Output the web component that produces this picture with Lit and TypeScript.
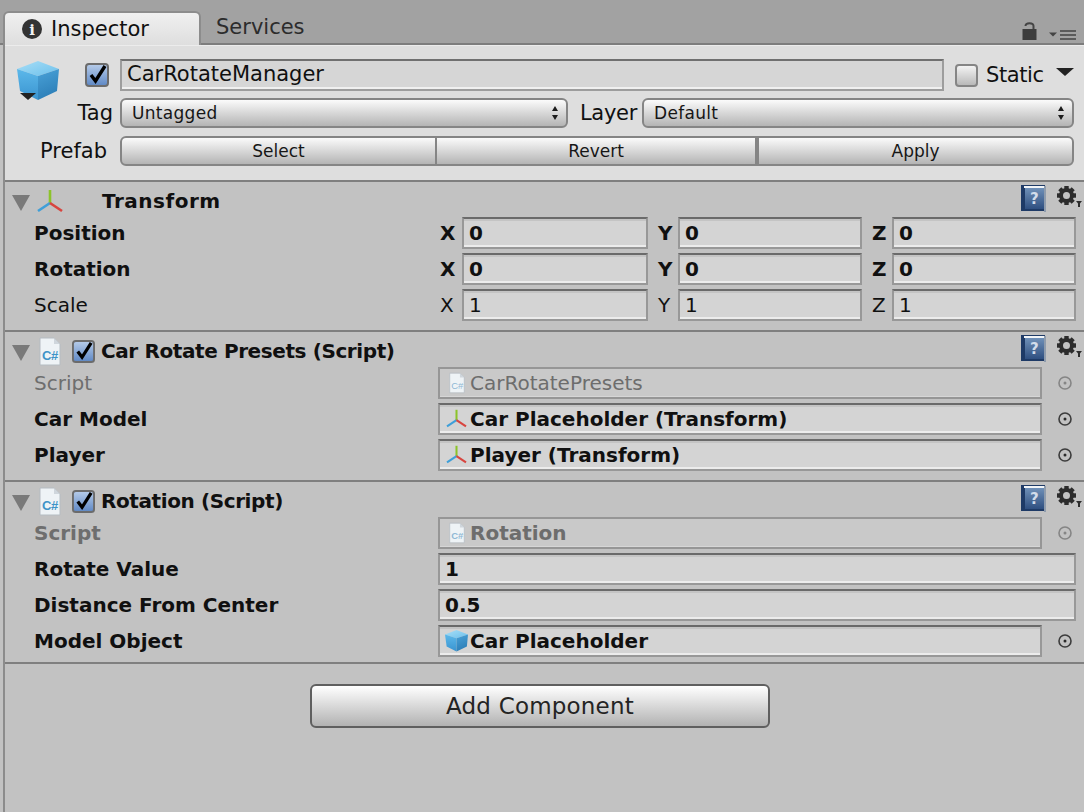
import { LitElement, html, svg, css } from "lit";
import { customElement } from "lit/decorators.js";

const cube = (w: number, h: number) => html`<svg width=${w} height=${h} viewBox="0 0 42 40">
  <defs>
    <linearGradient id="ct" x1="0" y1="0" x2="1" y2="1"><stop offset="0" stop-color="#a8def6"/><stop offset="1" stop-color="#6cc0ec"/></linearGradient>
    <linearGradient id="cl" x1="0" y1="0" x2="0" y2="1"><stop offset="0" stop-color="#5cb8ea"/><stop offset="1" stop-color="#3a94d0"/></linearGradient>
    <linearGradient id="cr" x1="0" y1="0" x2="0.300" y2="1"><stop offset="0" stop-color="#4aa2d8"/><stop offset="1" stop-color="#2d7fb8"/></linearGradient>
  </defs>
  <path d="M0 8 L21 0 L42 8 L21 15 Z" fill="url(#ct)"/>
  <path d="M0 8 L21 15 L21 39 L3 30 Z" fill="url(#cl)"/>
  <path d="M21 15 L42 8 L40 30 L21 39 Z" fill="url(#cr)"/>
</svg>`;

const axis = (w = 26, h = 24) => html`<svg width=${w} height=${h} viewBox="0 0 26 24" fill="none" stroke-width="2.600">
  <path d="M13 1 L13 14" stroke="#8cc32a"/>
  <path d="M13 14 L1 22" stroke="#3f9fd8"/>
  <path d="M13 14 L25 22" stroke="#d8453f"/>
</svg>`;

const csFile = (w = 22, h = 29, ink = "#3f94c8") => html`<svg width=${w} height=${h} viewBox="0 0 22 29">
  <path d="M1 1 H15 L21 7 V28 H1 Z" fill="#eef3f6" stroke="#b5bcc2" stroke-width="1"/>
  <path d="M15 1 V7 H21 Z" fill="#cfd6dc"/>
  <text x="3" y="23" font-family="Liberation Sans, sans-serif" font-size="13" fill=${ink}>C#</text>
</svg>`;

const help = () => html`<svg width="25" height="27" viewBox="0 0 25 27">
  <defs><linearGradient id="hb" x1="0" y1="0" x2="0" y2="1"><stop offset="0" stop-color="#6f90b8"/><stop offset="1" stop-color="#2f4f80"/></linearGradient></defs>
  <rect x="0" y="0" width="24" height="26" fill="#1e3a66"/>
  <rect x="3" y="1" width="21" height="2" fill="#f2f5f8"/>
  <rect x="23" y="1" width="2" height="26" fill="#8f9cad"/>
  <rect x="4" y="3" width="19" height="21" fill="url(#hb)"/>
  <text x="9" y="19" font-family="DejaVu Sans, sans-serif" font-size="15" fill="#d2dcea">?</text>
</svg>`;

const gear = () => html`<svg class="gear" width="25" height="22" viewBox="0 0 25 22">
  <g fill="#2c2c2c" transform="translate(9.500 9.500)">
    ${[0, 45, 90, 135].map((a) => svg`<rect x="-2.200" y="-9.500" width="4.400" height="19" transform="rotate(${a})"/>`)}
  </g>
  <circle cx="9.500" cy="9.500" r="5.500" fill="#c2c2c2" stroke="#2c2c2c" stroke-width="4"/>
  <path d="M19 15 H25 L23 17.500 V21 H21 V17.500 Z" fill="#2c2c2c"/>
</svg>`;

const picker = (dim = false) => html`<svg class="picker" width="16" height="16" viewBox="0 0 16 16">
  <circle cx="8" cy="8" r="6" fill="none" stroke=${dim ? "#858585" : "#3c3c3c"} stroke-width="1.600"/>
  <circle cx="8" cy="8" r="1.500" fill=${dim ? "#858585" : "#2a2a2a"}/>
</svg>`;

const check = (w = 24) => html`<svg width=${w} height=${w} viewBox="0 0 24 24">
  <defs><linearGradient id="cb" x1="0" y1="0" x2="0" y2="1"><stop offset="0" stop-color="#b8cdea"/><stop offset="1" stop-color="#5d87c4"/></linearGradient></defs>
  <rect x="1" y="1" width="22" height="22" rx="3" fill="url(#cb)" stroke="#6c6c6c" stroke-width="2"/>
  <path d="M6 12 L10.500 18 L20 3" fill="none" stroke="#000" stroke-width="3.400"/>
</svg>`;

const updown = () => html`<svg width="8" height="14" viewBox="0 0 8 14"><path d="M4 0 L7 5 H1 Z M4 14 L1 9 H7 Z" fill="#1c1c1c"/></svg>`;

@customElement("app-root")
export class AppRoot extends LitElement {
  static styles = css`
    :host {
      display: block;
      width: 1084px;
      height: 812px;
      overflow: hidden;
      background: #c2c2c2;
      font-family: "DejaVu Sans", sans-serif;
      font-size: 20px;
      color: #101010;
    }
    svg { display: block; flex: none; }
    .tabs {
      height: 45px;
      box-sizing: border-box;
      background: #a2a2a2;
      border-bottom: 2px solid #7d7d7d;
      display: flex;
      align-items: flex-end;
      padding-left: 3px;
    }
    .tab-active {
      width: 198px;
      height: 34px;
      box-sizing: border-box;
      margin-bottom: -2px;
      background: linear-gradient(#f0f0f0, #dedede);
      border: 2px solid #8c8c8c;
      border-bottom: none;
      border-radius: 6px 6px 0 0;
      display: flex;
      align-items: center;
      gap: 8px;
      padding-left: 16px;
      font-size: 21px;
    }
    .tab {
      margin-left: 15px;
      height: 32px;
      display: flex;
      align-items: center;
      font-size: 21px;
      color: #2c2c2c;
    }
    .tab-tools {
      margin-left: auto;
      display: flex;
      align-items: flex-end;
      gap: 12px;
      padding: 0 8px 3px 0;
    }
    .body {
      margin-left: 3px;
      border-left: 2px solid #8c8c8c;
      height: 767px;
    }
    .head {
      height: 135px;
      box-sizing: border-box;
      background: #dedede;
      padding-top: 14px;
      display: flex;
      flex-direction: column;
      gap: 8px;
      border-top: 1px solid #ececec;
    }
    .hrow {
      display: flex;
      align-items: center;
      height: 30px;
    }
    .hlabel {
      width: 115px;
      box-sizing: border-box;
      text-align: right;
      flex: none;
      font-size: 21px;
      padding-right: 7px;
    }
    .hlabel.prefab { padding-right: 13px; }
    .cube-wrap {
      position: relative;
      width: 42px;
      height: 30px;
      margin-left: 12px;
      flex: none;
    }
    .cube-wrap svg { position: absolute; left: 0; top: 1px; }
    .cube-arrow {
      position: absolute;
      left: 3px;
      top: 33px;
      width: 0;
      height: 0;
      border: 8px solid transparent;
      border-top: 7px solid #222;
      border-bottom: none;
    }
    .name-check { margin: 0 11px 0 26px; }
    .name {
      width: 824px;
      height: 32px;
      flex: none;
      box-sizing: border-box;
      border: 2px solid #9d9d9d;
      border-top-color: #707070;
      background: #d6d6d6;
      box-shadow: inset 0 -2px 0 #f0f0f0;
      padding: 0 0 2px 5px;
      display: flex;
      align-items: center;
      font-size: 21px;
    }
    .static-box {
      width: 23px;
      height: 23px;
      box-sizing: border-box;
      flex: none;
      margin-left: 11px;
      border: 2px solid #858585;
      border-radius: 4px;
      background: linear-gradient(#f3f3f3, #b9b9b9);
    }
    .static { margin-left: 8px; font-size: 21px; letter-spacing: -0.4px; }
    .tri {
      margin-left: 12px;
      width: 0;
      height: 0;
      border: 9px solid transparent;
      border-top: 8px solid #222;
      border-bottom: none;
      margin-top: -6px;
    }
    .btn {
      box-sizing: border-box;
      height: 30px;
      border: 2px solid #858585;
      border-radius: 6px;
      background: linear-gradient(#fbfbfb, #b4b4b4);
      display: flex;
      align-items: center;
      justify-content: center;
      font-size: 17px;
      color: #161616;
    }
    .select {
      justify-content: space-between;
      padding: 0 7px 0 10px;
      letter-spacing: 0.3px;
    }
    .tag-select { width: 448px; }
    .layer-select { width: 432px; }
    .layer-label {
      width: 74px;
      box-sizing: border-box;
      text-align: right;
      padding-right: 5px;
      font-size: 21px;
      flex: none;
      letter-spacing: -0.3px;
    }
    .seg { border-radius: 0; }
    .seg.first { border-radius: 6px 0 0 6px; width: 317px; }
    .seg.mid { width: 320px; border-left: none; }
    .seg.last { width: 317px; border-radius: 0 6px 6px 0; border-left: 2px solid #858585; }
    .section {
      border-top: 2px solid #7f7f7f;
      padding: 0 8px 7px 0;
    }
    .section.end { padding-bottom: 3px; border-bottom: 2px solid #7f7f7f; }
    .shead {
      height: 33px;
      box-sizing: border-box;
      padding-top: 5px;
      display: flex;
      align-items: center;
      font-weight: bold;
      font-size: 20px;
      letter-spacing: -0.4px;
    }
    .title-wide { letter-spacing: 0.5px; }
    .fold {
      width: 0;
      height: 0;
      border: 9px solid transparent;
      border-top: 16px solid #7a7a7a;
      border-bottom: none;
      margin: 3px 7px 0 7px;
      flex: none;
    }
    .file-ic { margin-left: 2px; }
    .spacer { width: 39px; flex: none; }
    .shead-check { margin: 0 6px 0 11px; }
    .sicons {
      margin-left: auto;
      display: flex;
      align-items: center;
      margin-right: -6px;
      margin-top: -5px;
    }
    .gear { margin: -3px 0 0 11px; }
    .row {
      height: 36px;
      display: grid;
      grid-template-columns: 404px 1fr;
      align-items: center;
      padding-left: 29px;
    }
    .row.b .lbl, .row.b .axisl, .row.b .field { font-weight: bold; }
    .row.muted .lbl { color: #6e6e6e; }
    .vec {
      display: grid;
      grid-template-columns: 24px 186px 30px 184px 30px 184px;
      align-items: center;
    }
    .axisl { font-size: 20px; }
    .axisl.x { margin-left: 2px; }
    .axisl.yz { margin-left: 10px; }
    .field {
      box-sizing: border-box;
      height: 32px;
      border: 2px solid #989898;
      border-top-color: #6a6a6a;
      background: #d4d4d4;
      box-shadow: inset 0 2px 0 #c4c4c4, inset 0 -2px 0 #ececec;
      padding: 0 0 1px 5px;
      display: flex;
      align-items: center;
      font-size: 20px;
    }
    .obj {
      display: flex;
      align-items: center;
    }
    .obj .field { width: 604px; flex: none; }
    .ic { width: 23px; margin-right: 2px; display: flex; justify-content: center; flex: none; }
    .picker { margin-left: 15px; }
    .row.muted .field {
      border-color: #969696;
      background: #c9c9c9;
      color: #6d6d6d;
      box-shadow: inset 0 -1px 0 #d6d6d6;
    }
    .add-wrap { display: flex; padding: 20px 0 0 305px; }
    .add {
      width: 460px;
      height: 44px;
      font-size: 23px;
      letter-spacing: 0.2px;
      color: #242424;
      border-color: #5f5f5f;
      background: linear-gradient(#ffffff, #b2b2b2);
    }
  `;

  vecRow(label: string, bold: boolean, v: [string, string, string]) {
    return html`<div class="row ${bold ? "b" : ""}">
      <span class="lbl">${label}</span>
      <div class="vec">
        <span class="axisl x">X</span><div class="field">${v[0]}</div>
        <span class="axisl yz">Y</span><div class="field">${v[1]}</div>
        <span class="axisl yz">Z</span><div class="field">${v[2]}</div>
      </div>
    </div>`;
  }

  objRow(label: string, icon: unknown, text: string, muted = false, bold = true) {
    return html`<div class="row ${muted ? "muted" : ""} ${bold ? "b" : ""}">
      <span class="lbl">${label}</span>
      <div class="obj">
        <div class="field"><span class="ic">${icon}</span><span>${text}</span></div>
        ${picker(muted)}
      </div>
    </div>`;
  }

  valRow(label: string, value: string) {
    return html`<div class="row b">
      <span class="lbl">${label}</span>
      <div class="field">${value}</div>
    </div>`;
  }

  shead(icon: unknown, title: string, withCheck: boolean) {
    return html`<div class="shead">
      <span class="fold"></span>
      ${icon}
      ${withCheck ? html`<span class="shead-check">${check(23)}</span>` : html`<span class="spacer"></span>`}
      <span class=${withCheck ? "" : "title-wide"}>${title}</span>
      <span class="sicons">${help()}${gear()}</span>
    </div>`;
  }

  render() {
    const headFile = html`<span class="file-ic">${csFile()}</span>`;
    const dimFile = csFile(16, 22, "#8fb8d4");
    return html`
      <div class="tabs">
        <div class="tab-active">
          <svg width="22" height="22" viewBox="0 0 22 22">
            <circle cx="11" cy="11" r="10" fill="#333"/>
            <text x="11" y="16.500" text-anchor="middle" font-family="DejaVu Serif, serif" font-weight="bold" font-size="15" fill="#f2f2f2">i</text>
          </svg>
          <span>Inspector</span>
        </div>
        <div class="tab">Services</div>
        <div class="tab-tools">
          <svg width="15" height="18" viewBox="0 0 15 18">
            <path d="M3.500 4 Q3.500 1.200 7.500 1.200 Q11.500 1.200 11.500 4 V8" fill="none" stroke="#444" stroke-width="2"/>
            <rect x="0.500" y="7" width="14" height="11" fill="#3c3c3c"/>
          </svg>
          <svg width="27" height="10" viewBox="0 0 27 10">
            <path d="M0 2.500 H8 L4 6.500 Z" fill="#444"/>
            <path d="M11 1 H27 M11 5 H27 M11 9 H27" stroke="#444" stroke-width="1.600"/>
          </svg>
        </div>
      </div>
      <div class="body">
        <div class="head">
          <div class="hrow">
            <span class="cube-wrap">${cube(42, 40)}<span class="cube-arrow"></span></span>
            <span class="name-check">${check(24)}</span>
            <div class="name">CarRotateManager</div>
            <span class="static-box"></span>
            <span class="static">Static</span>
            <span class="tri"></span>
          </div>
          <div class="hrow">
            <span class="hlabel">Tag</span>
            <div class="btn select tag-select"><span>Untagged</span>${updown()}</div>
            <span class="layer-label">Layer</span>
            <div class="btn select layer-select"><span>Default</span>${updown()}</div>
          </div>
          <div class="hrow">
            <span class="hlabel prefab">Prefab</span>
            <div class="btn seg first">Select</div>
            <div class="btn seg mid">Revert</div>
            <div class="btn seg last">Apply</div>
          </div>
        </div>
        <div class="section">
          ${this.shead(axis(), "Transform", false)}
          ${this.vecRow("Position", true, ["0", "0", "0"])}
          ${this.vecRow("Rotation", true, ["0", "0", "0"])}
          ${this.vecRow("Scale", false, ["1", "1", "1"])}
        </div>
        <div class="section">
          ${this.shead(headFile, "Car Rotate Presets (Script)", true)}
          ${this.objRow("Script", dimFile, "CarRotatePresets", true, false)}
          ${this.objRow("Car Model", axis(21, 19), "Car Placeholder (Transform)")}
          ${this.objRow("Player", axis(21, 19), "Player (Transform)")}
        </div>
        <div class="section end">
          ${this.shead(headFile, "Rotation (Script)", true)}
          ${this.objRow("Script", dimFile, "Rotation", true, true)}
          ${this.valRow("Rotate Value", "1")}
          ${this.valRow("Distance From Center", "0.5")}
          ${this.objRow("Model Object", cube(23, 22), "Car Placeholder")}
        </div>
        <div class="add-wrap"><div class="btn add">Add Component</div></div>
      </div>
    `;
  }
}
